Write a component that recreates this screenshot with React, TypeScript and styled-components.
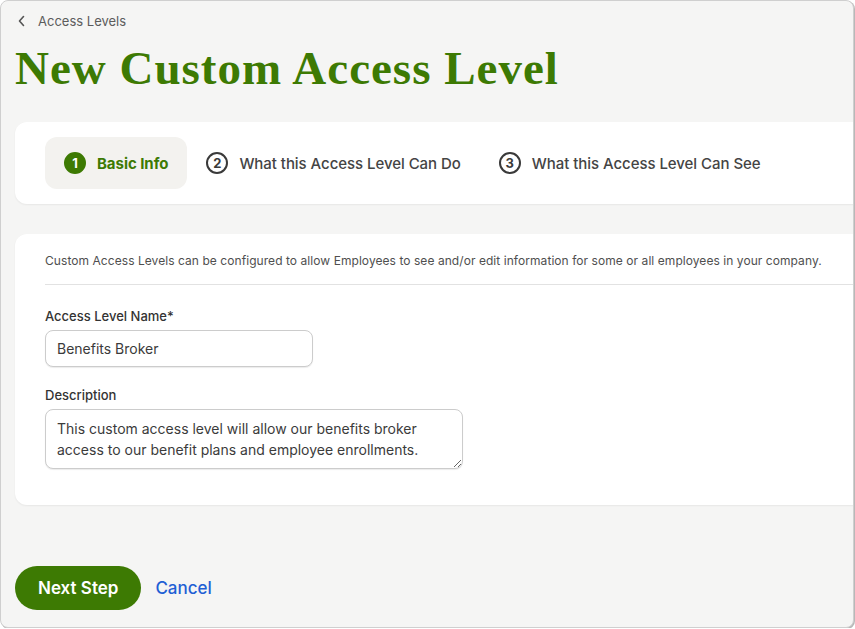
import React from 'react';
import styled, { createGlobalStyle } from 'styled-components';

const GlobalStyle = createGlobalStyle`
  html, body {
    margin: 0;
    padding: 0;
    background: #ffffff;
  }
  body {
    font-family: Inter, "Noto Sans", "Liberation Sans", sans-serif;
  }
  * {
    box-sizing: border-box;
  }
`;

const steps = [
  { n: 1, label: 'Basic Info' },
  { n: 2, label: 'What this Access Level Can Do' },
  { n: 3, label: 'What this Access Level Can See' },
];

const ChevronLeft = () => (
  <svg width="10" height="12" viewBox="0 0 10 12" fill="none">
    <path d="M6.5 1.5 2.5 6l4 4.5" stroke="#555" strokeWidth="1.6" strokeLinecap="round" strokeLinejoin="round" />
  </svg>
);

export default function App() {
  return (
    <>
      <GlobalStyle />
      <Frame>
        <Breadcrumb href="#">
          <ChevronLeft />
          <span>Access Levels</span>
        </Breadcrumb>

        <Title>New Custom Access Level</Title>

        <StepsCard>
          {steps.map(s => (
            <Step key={s.n} active={s.n === 1}>
              <StepNumber active={s.n === 1}>{s.n}</StepNumber>
              <StepLabel active={s.n === 1}>{s.label}</StepLabel>
            </Step>
          ))}
        </StepsCard>

        <FormCard>
          <Intro>
            Custom Access Levels can be configured to allow Employees to see and/or edit information for some or all
            employees in your company.
          </Intro>
          <Divider />

          <Field>
            <Label htmlFor="level-name">Access Level Name*</Label>
            <TextInput id="level-name" defaultValue="Benefits Broker" />
          </Field>

          <Field>
            <Label htmlFor="level-desc">Description</Label>
            <TextArea
              id="level-desc"
              defaultValue="This custom access level will allow our benefits broker access to our benefit plans and employee enrollments."
            />
          </Field>
        </FormCard>

        <Actions>
          <PrimaryButton>Next Step</PrimaryButton>
          <LinkButton>Cancel</LinkButton>
        </Actions>
      </Frame>
    </>
  );
}

const Frame = styled.div`
  width: 854px;
  height: 628px;
  background: #f5f5f4;
  border: 1px solid #cfcfcf;
  border-radius: 8px;
  box-shadow: 1px 1px 0 #b8b8b8;
  overflow: hidden;
  display: flex;
  flex-direction: column;
  padding: 11px 0 0 14px;
`;

const Breadcrumb = styled.a`
  display: flex;
  align-items: center;
  gap: 11px;
  padding-left: 2px;
  height: 18px;
  font-size: 13px;
  color: #5c5c5c;
  text-decoration: none;
`;

const Title = styled.h1`
  margin: 8px 0 0;
  font-family: "Liberation Serif", "Times New Roman", serif;
  font-weight: 700;
  font-size: 47px;
  letter-spacing: 1px;
  line-height: 60px;
  color: #3d7a03;
`;

const Card = styled.div`
  background: #ffffff;
  border-radius: 12px 0 0 12px;
  margin-right: -2px;
  box-shadow: 0 1px 2px rgba(0, 0, 0, 0.06);
`;

const StepsCard = styled(Card)`
  margin-top: 24px;
  height: 82px;
  display: flex;
  align-items: center;
  padding: 0 30px;
`;

const Step = styled.div<{ active?: boolean }>`
  display: flex;
  align-items: center;
  gap: 11px;
  height: 52px;
  padding: 0 19px;
  border-radius: 12px;
  background: ${p => (p.active ? '#f3f2ef' : 'transparent')};
`;

const StepNumber = styled.span<{ active?: boolean }>`
  width: 22px;
  height: 22px;
  border-radius: 50%;
  display: flex;
  align-items: center;
  justify-content: center;
  font-size: 13px;
  font-weight: 700;
  color: ${p => (p.active ? '#ffffff' : '#3a3a3a')};
  background: ${p => (p.active ? '#3d7a03' : 'transparent')};
  border: 2px solid ${p => (p.active ? '#3d7a03' : '#3a3a3a')};
`;

const StepLabel = styled.span<{ active?: boolean }>`
  font-size: 15px;
  font-weight: ${p => (p.active ? 700 : 500)};
  letter-spacing: -0.05px;
  color: ${p => (p.active ? '#3d7a03' : '#444444')};
`;

const FormCard = styled(Card)`
  margin-top: 30px;
  height: 271px;
  padding: 18px 0 0 30px;
  display: flex;
  flex-direction: column;
`;

const Intro = styled.p`
  margin: 0;
  font-size: 12px;
  letter-spacing: 0.06px;
  line-height: 18px;
  color: #4f4f4f;
`;

const Divider = styled.hr`
  margin: 14px 0 0;
  border: none;
  border-top: 1px solid #e2e2e2;
`;

const Field = styled.div`
  display: flex;
  flex-direction: column;
  align-items: flex-start;
  margin-top: 22px;

  & + & {
    margin-top: 19px;
  }
`;

const Label = styled.label`
  font-size: 13px;
  font-weight: 500;
  line-height: 18px;
  color: #333333;
  margin-bottom: 5px;
`;

const TextInput = styled.input`
  width: 268px;
  height: 37px;
  padding: 0 11px;
  border: 1px solid #cccccc;
  border-radius: 8px;
  font-family: inherit;
  font-size: 14px;
  color: #3b3b3b;
  background: #ffffff;
  outline: none;
  box-shadow: 0 1px 1px rgba(0, 0, 0, 0.08);
`;

const TextArea = styled.textarea`
  width: 418px;
  height: 60px;
  padding: 8px 11px;
  border: 1px solid #cccccc;
  border-radius: 8px;
  font-family: inherit;
  font-size: 14px;
  line-height: 21px;
  color: #3b3b3b;
  background: #ffffff;
  outline: none;
  resize: vertical;
  box-shadow: 0 1px 1px rgba(0, 0, 0, 0.08);
`;

const Actions = styled.div`
  margin-top: 61px;
  display: flex;
  align-items: center;
  gap: 14px;
`;

const PrimaryButton = styled.button`
  height: 44px;
  padding: 0 23px;
  border: none;
  border-radius: 22px;
  background: #3d7a03;
  color: #ffffff;
  font-family: inherit;
  font-size: 17px;
  font-weight: 600;
  cursor: pointer;
`;

const LinkButton = styled.button`
  border: none;
  background: none;
  padding: 0;
  font-family: inherit;
  font-size: 17px;
  font-weight: 500;
  color: #1f5fd4;
  cursor: pointer;
`;
